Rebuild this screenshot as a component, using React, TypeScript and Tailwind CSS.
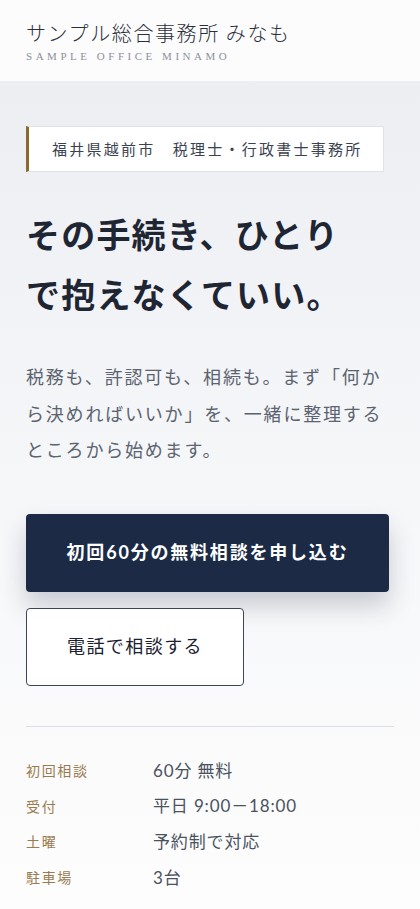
import React from 'react';

const info = [
  { label: '初回相談', value: '60分 無料' },
  { label: '受付', value: '平日 9:00－18:00' },
  { label: '土曜', value: '予約制で対応' },
  { label: '駐車場', value: '3台' },
];

const App: React.FC = () => {
  return (
    <div className="min-h-screen bg-[#fdfdfd] font-['Lato','Noto_Sans_CJK_JP',sans-serif]">
      {/* Header */}
      <header className="h-[81px] bg-[#fcfcfd] px-[26px] pt-[19px]">
        <h1 className="text-[20px] leading-[28px] tracking-[0.08em] font-light text-[#2a2f38] font-['Noto_Sans_CJK_JP',serif]">
          サンプル総合事務所 みなも
        </h1>
        <p className="mt-[2px] text-[11px] leading-[14px] tracking-[0.32em] text-[#8c9099] font-['Liberation_Serif',serif]">
          SAMPLE OFFICE MINAMO
        </p>
      </header>

      <main className="bg-gradient-to-b from-[#eceef2] via-[#f6f7f9] to-[#fdfdfd] px-[26px] pt-[45px] pb-[20px]">
        {/* Tag */}
        <div className="h-[46px] flex items-center bg-white border border-[#dfe2e8] border-l-[3px] border-l-[#8b6a2e] pl-[23px] mr-[10px]">
          <span className="text-[15px] tracking-[0.15em] text-[#3a4250]">
            福井県越前市　税理士・行政書士事務所
          </span>
        </div>

        {/* Headline */}
        <h2 className="mt-[33px] text-[34px] leading-[60px] font-bold tracking-[0.035em] text-[#1f2633]">
          その手続き、ひとり
          <br />
          で抱えなくていい。
        </h2>

        <p className="mt-[34px] text-[18px] leading-[36.5px] tracking-[0.1em] text-[#5b6370]">
          税務も、許認可も、相続も。まず「何から決めればいいか」を、一緒に整理するところから始めます。
        </p>

        {/* Buttons */}
        <div className="mt-[45px] flex flex-col items-start gap-[16px]">
          <button className="w-[363px] h-[78px] rounded-[4px] bg-[#1c2a45] text-white text-[18px] font-bold tracking-[0.1em] shadow-[0_14px_26px_rgba(28,42,69,0.22)]">
            初回60分の無料相談を申し込む
          </button>
          <button className="w-[218px] h-[78px] rounded-[4px] bg-white border-[1.5px] border-[#3a4556] text-[#1a2130] text-[18px] font-normal tracking-[0.08em]">
            電話で相談する
          </button>
        </div>

        <div className="mt-[40px] h-px bg-[#d9dde5]" />

        {/* Info */}
        <dl className="mt-[26px]">
          {info.map((row) => (
            <div key={row.label} className="flex items-center h-[35.7px]">
              <dt className="w-[127px] text-[14px] tracking-[0.12em] text-[#9a7b4f]">{row.label}</dt>
              <dd className="text-[17px] tracking-[0.05em] text-[#4a5260]">{row.value}</dd>
            </div>
          ))}
        </dl>
      </main>
    </div>
  );
};

export default App;
